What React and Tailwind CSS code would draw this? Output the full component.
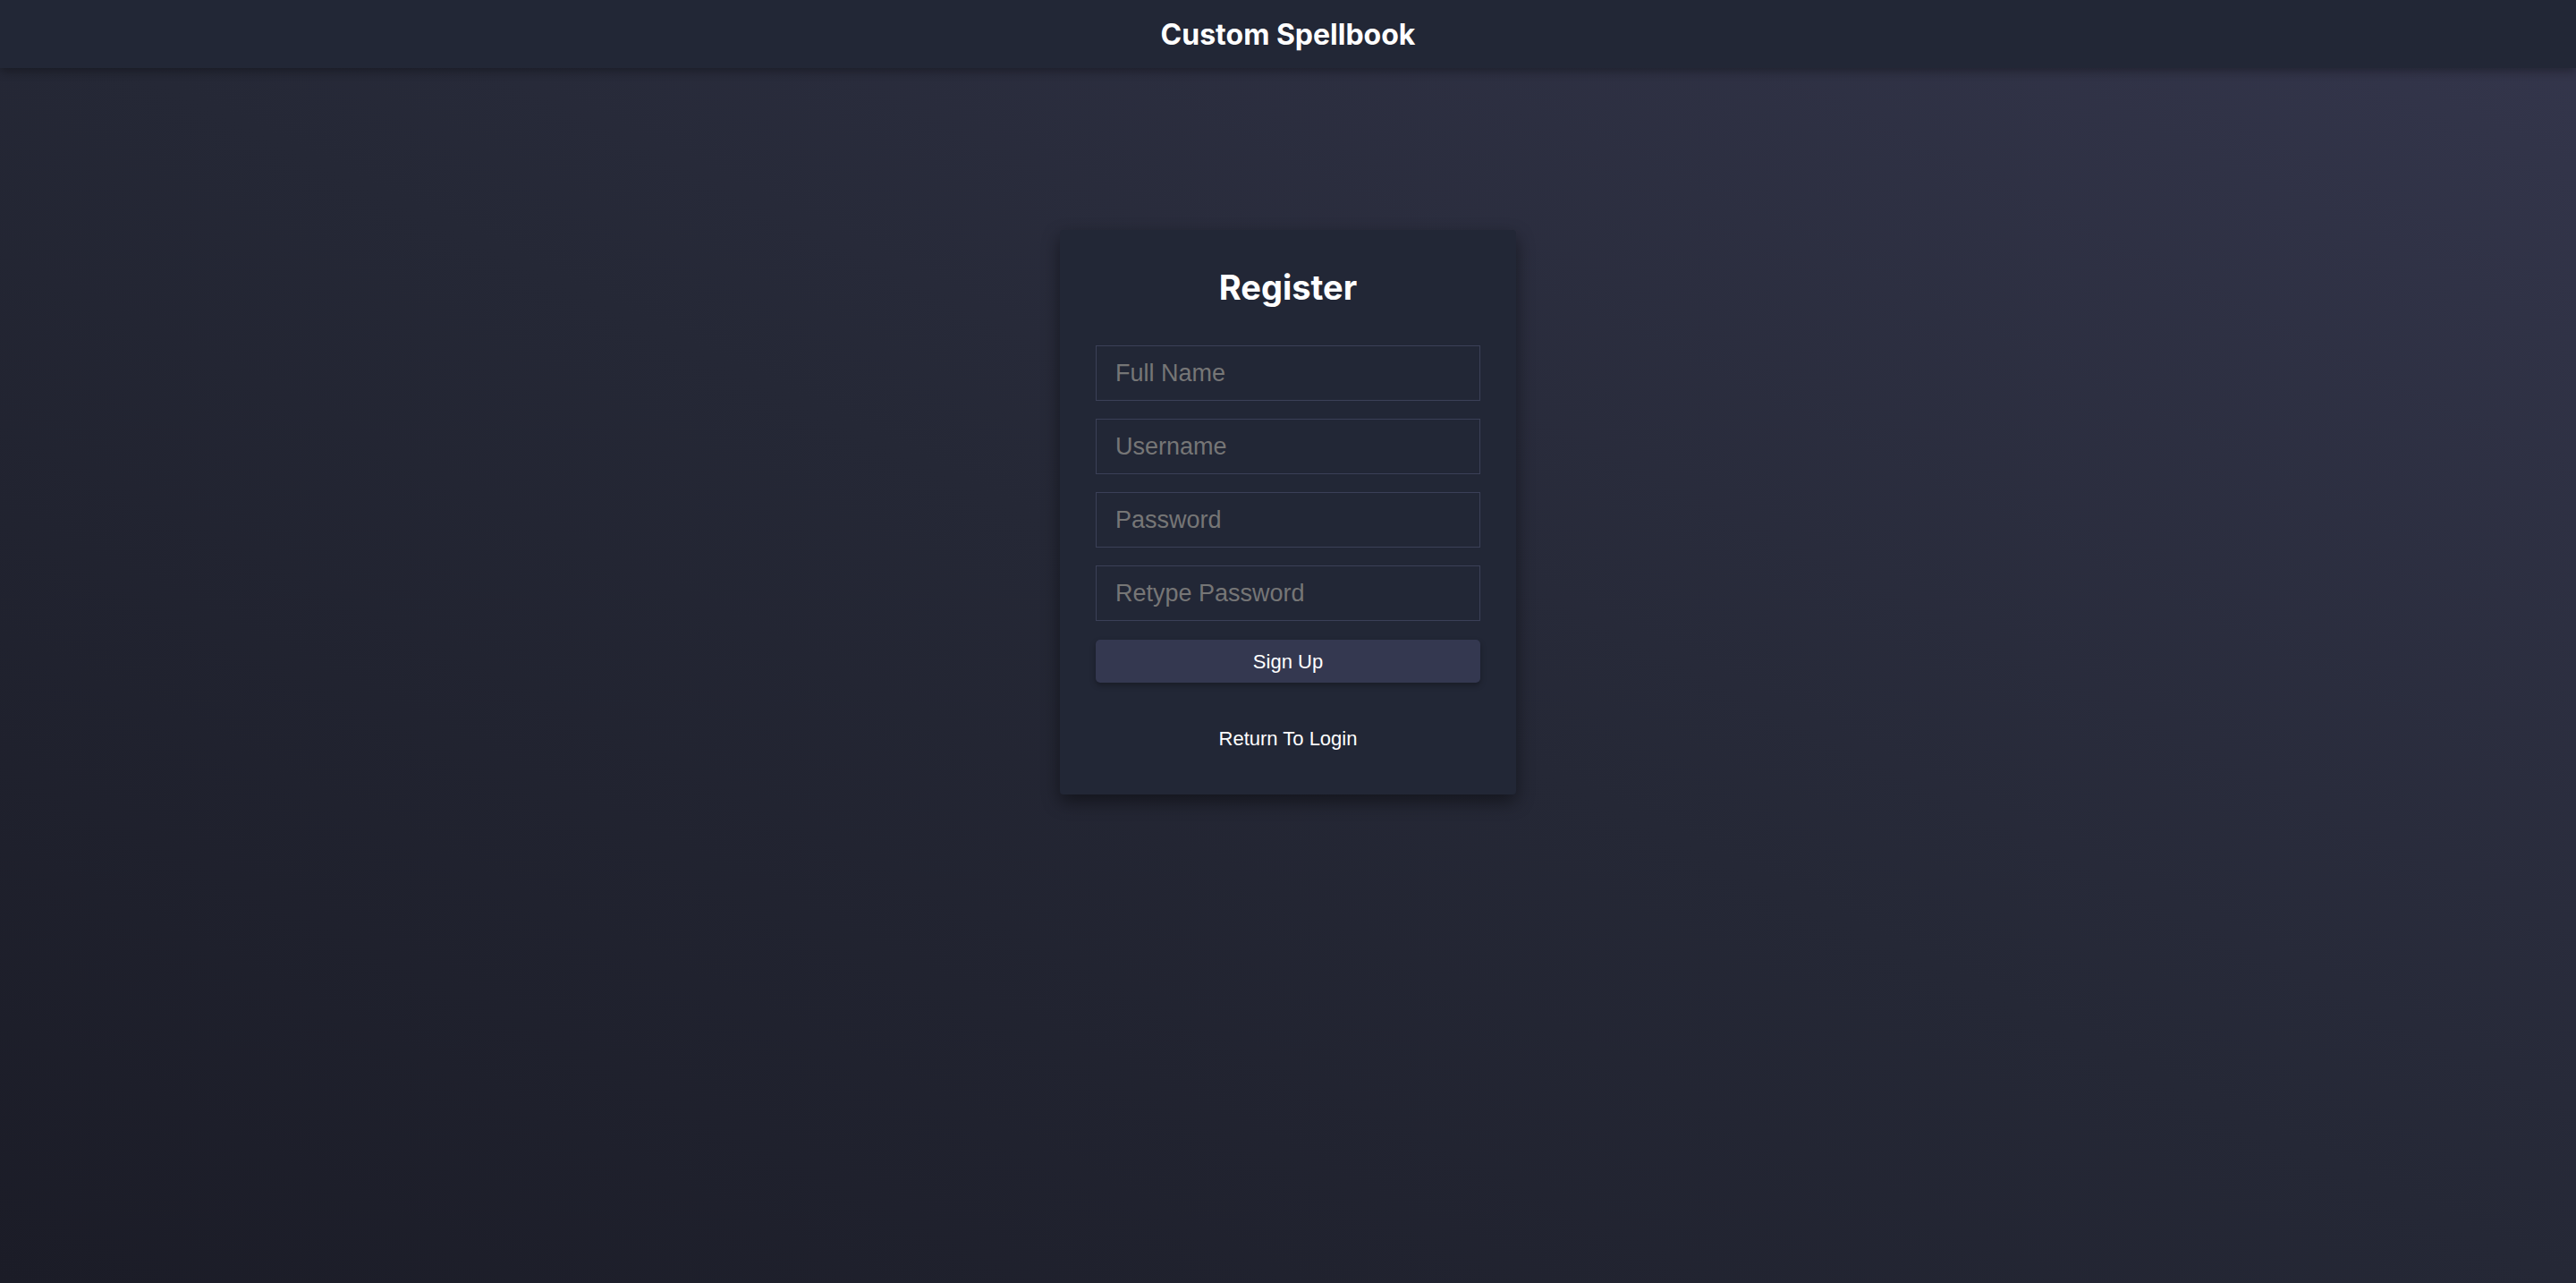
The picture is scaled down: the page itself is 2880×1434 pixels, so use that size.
import { useState } from 'react';

function App() {
  const [form, setForm] = useState({
    fullName: '',
    username: '',
    password: '',
    retype: ''
  });

  const handleChange = (e) => {
    const { name, value } = e.target;
    setForm(prev => ({ ...prev, [name]: value }));
  };

  const fields = [
    { name: 'fullName', type: 'text', placeholder: 'Full Name' },
    { name: 'username', type: 'text', placeholder: 'Username' },
    { name: 'password', type: 'password', placeholder: 'Password' },
    { name: 'retype', type: 'password', placeholder: 'Retype Password' }
  ];

  return (
    <div className="min-h-screen flex flex-col bg-gradient-to-tr from-[#1b1c27] via-[#252836] to-[#34364c] font-['Inter',sans-serif]">
      {/* Header */}
      <header className="h-[76px] bg-[#222736] shadow-[0_4px_10px_rgba(0,0,0,0.3)] flex justify-center pt-[15px] relative z-10">
        <h1 className="text-[32px] leading-[48px] font-bold text-white">Custom Spellbook</h1>
      </header>

      {/* Register card */}
      <main className="flex justify-center pt-[181px]">
        <div className="w-[510px] bg-[#222736] rounded-[4px] shadow-[0_8px_20px_rgba(0,0,0,0.45)] px-[40px] pt-[45px] pb-[48px]">
          <h2 className="text-[38px] leading-[38px] font-bold text-white text-center mb-[46px]">
            Register
          </h2>

          <form className="flex flex-col gap-[20px] font-['Liberation_Sans',Arial,sans-serif]" onSubmit={(e) => e.preventDefault()}>
            {fields.map((f) => (
              <input
                key={f.name}
                type={f.type}
                name={f.name}
                value={form[f.name]}
                onChange={handleChange}
                placeholder={f.placeholder}
                className="h-[62px] w-full bg-transparent border border-[#3b4057] px-[21px] text-[27px] text-white placeholder:text-[#767676] outline-none"
              />
            ))}
            <button
              type="submit"
              className="mt-[1px] h-[48px] w-full bg-[#343850] rounded-[5px] text-white text-[22px] shadow-[0_3px_6px_rgba(0,0,0,0.3)]"
            >
              Sign Up
            </button>
          </form>

          <div className="mt-[50px] text-center font-['Liberation_Sans',Arial,sans-serif]">
            <button type="button" className="text-white text-[22px] leading-[26px]">
              Return To Login
            </button>
          </div>
        </div>
      </main>
    </div>
  );
}

export default App;
